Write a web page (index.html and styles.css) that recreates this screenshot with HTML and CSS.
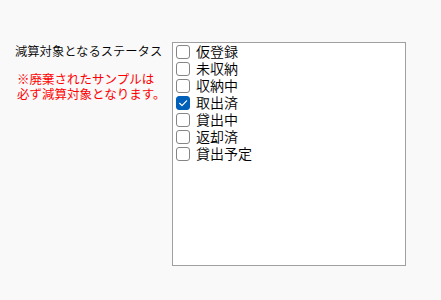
FILE: index.html
```html
<!DOCTYPE html>
<html lang="ja">
<head>
<meta charset="utf-8">
<link rel="stylesheet" href="styles.css">
</head>
<body>
<div class="form-row">
  <div class="side">
    <div class="label">減算対象となるステータス</div>
    <div class="note">※廃棄されたサンプルは<br>必ず減算対象となります。</div>
  </div>
  <div class="listbox">
    <div class="item"><span class="cb"></span><span class="txt">仮登録</span></div>
    <div class="item"><span class="cb"></span><span class="txt">未収納</span></div>
    <div class="item"><span class="cb"></span><span class="txt">収納中</span></div>
    <div class="item"><span class="cb checked"><svg viewBox="0 0 14 14" width="14" height="14"><path d="M3.6 7.3 L6 9.6 L10.6 4.8" fill="none" stroke="#fff" stroke-width="1.2" stroke-linecap="round" stroke-linejoin="round"/></svg></span><span class="txt">取出済</span></div>
    <div class="item"><span class="cb"></span><span class="txt">貸出中</span></div>
    <div class="item"><span class="cb"></span><span class="txt">返却済</span></div>
    <div class="item"><span class="cb"></span><span class="txt">貸出予定</span></div>
  </div>
</div>
</body>
</html>
```

FILE: styles.css
```css
html, body {
  margin: 0;
  padding: 0;
  background: #f9f9f9;
}
body {
  font-family: "Noto Sans CJK JP", "Noto Sans", sans-serif;
  color: #000;
  font-weight: 350;
}
.form-row {
  display: flex;
  padding: 42px 0 0 15px;
}
.side {
  width: 157px;
  display: flex;
  flex-direction: column;
}
.label {
  font-size: 12.3px;
  line-height: 16px;
  margin-top: 1px;
  white-space: nowrap;
}
.note {
  margin-top: 12px;
  margin-left: 2px;
  font-size: 12.5px;
  line-height: 15px;
  color: #ff0000;
  font-weight: 400;
  white-space: nowrap;
}
.listbox {
  box-sizing: border-box;
  width: 234px;
  height: 224px;
  background: #fff;
  border: 1px solid #a0a0a0;
  padding: 0 0 0 3px;
}
.item {
  display: flex;
  align-items: flex-start;
  height: 17px;
}
.cb {
  box-sizing: border-box;
  flex: none;
  width: 14px;
  height: 14px;
  margin-top: 2px;
  border: 1px solid #858585;
  border-radius: 3px;
  background: #fff;
  display: flex;
}
.cb.checked {
  background: #005fb8;
  border-color: #005fb8;
}
.cb svg {
  margin: -1px;
}
.txt {
  margin-left: 6px;
  font-size: 14px;
  line-height: 17px;
  white-space: nowrap;
}
```
